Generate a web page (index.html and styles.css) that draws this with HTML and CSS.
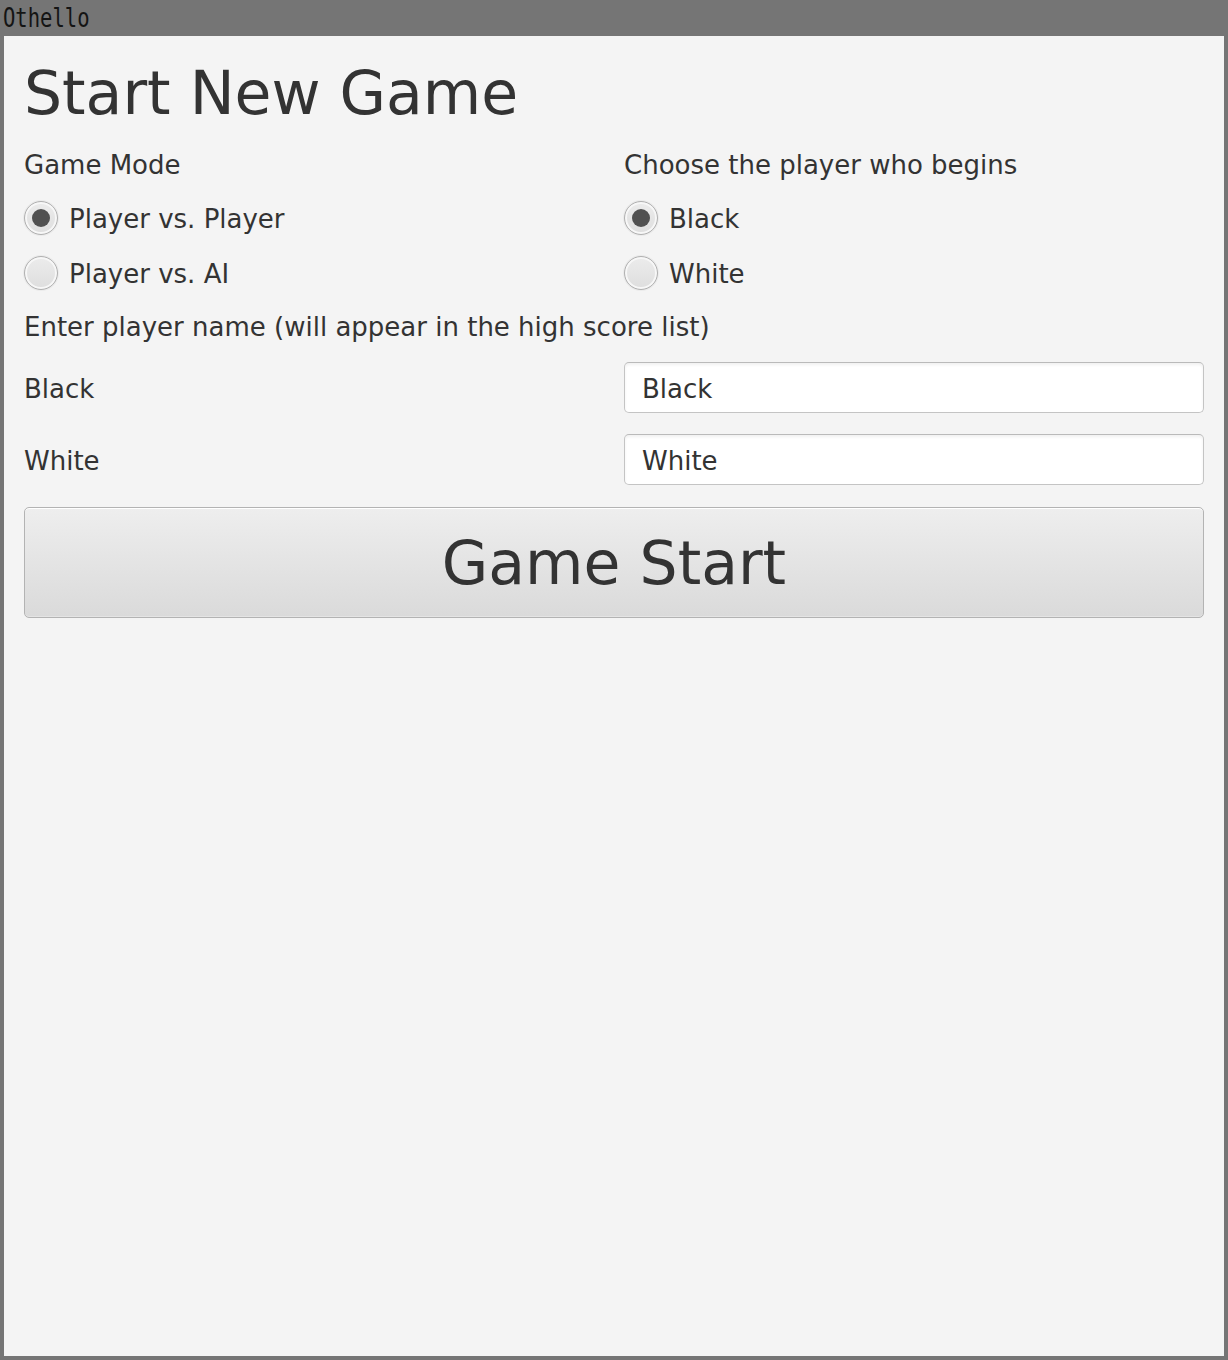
FILE: index.html
```html
<!DOCTYPE html>
<html lang="en">
<head>
<meta charset="utf-8">
<title>Othello</title>
<link rel="stylesheet" href="styles.css">
</head>
<body>
<div class="window">
  <div class="titlebar"><span class="title-text">Othello</span></div>
  <div class="content">
    <h1 class="heading">Start New Game</h1>
    <div class="row row-head">
      <div class="label">Game Mode</div>
      <div class="label">Choose the player who begins</div>
    </div>
    <div class="row row-radio">
      <label class="radio-item"><span class="radio selected"></span><span class="radio-text">Player vs. Player</span></label>
      <label class="radio-item"><span class="radio selected"></span><span class="radio-text">Black</span></label>
    </div>
    <div class="row row-radio row-radio2">
      <label class="radio-item"><span class="radio"></span><span class="radio-text">Player vs. AI</span></label>
      <label class="radio-item"><span class="radio"></span><span class="radio-text">White</span></label>
    </div>
    <div class="label row-enter">Enter player name (will appear in the high score list)</div>
    <div class="row row-field">
      <div class="label field-label">Black</div>
      <input class="field" type="text" value="Black">
    </div>
    <div class="row row-field row-field2">
      <div class="label field-label">White</div>
      <input class="field" type="text" value="White">
    </div>
    <button class="start-btn" type="button">Game Start</button>
  </div>
</div>
</body>
</html>
```
FILE: styles.css
```css
* { box-sizing: border-box; }
html, body { margin: 0; padding: 0; }
body {
  background: #757575;
  font-family: "DejaVu Sans", sans-serif;
  color: #333333;
}
.window {
  width: 1228px;
  height: 1360px;
  display: flex;
  flex-direction: column;
}
.titlebar {
  height: 36px;
  flex: none;
  padding-left: 3px;
  overflow: hidden;
}
.title-text {
  display: inline-block;
  font-family: "DejaVu Sans Mono", monospace;
  font-size: 26px;
  line-height: 36px;
  color: #141414;
  transform: scaleX(0.79);
  transform-origin: left center;
}
.content {
  flex: 1;
  margin: 0 4px 4px 4px;
  background: #f4f4f4;
  padding: 20px 20px;
  display: flex;
  flex-direction: column;
}
.heading {
  margin: 0;
  font-size: 60px;
  font-weight: normal;
  line-height: 74px;
  height: 74px;
}
.row {
  display: grid;
  grid-template-columns: 1fr 1fr;
  column-gap: 20px;
  align-items: center;
}
.label {
  font-size: 26px;
  line-height: 30px;
}
.field-label { padding-top: 2px; }
.row-head { margin-top: 20px; }
.row-radio { margin-top: 20px; height: 35px; }
.radio-item {
  display: flex;
  align-items: center;
  gap: 11px;
  height: 35px;
}
.radio {
  width: 34px;
  height: 34px;
  flex: none;
  border-radius: 50%;
  border: 1px solid #b0b0b0;
  background: linear-gradient(#ececec, #dedede);
  box-shadow: inset 0 0 0 2px #f7f7f7, 0 0 0 1px rgba(0,0,0,0.04);
  position: relative;
}
.radio.selected::after {
  content: "";
  position: absolute;
  left: 7px;
  top: 7px;
  width: 18px;
  height: 18px;
  border-radius: 50%;
  background: #505050;
}
.radio-text {
  font-size: 26px;
  line-height: 35px;
  padding-top: 4px;
}
.row-enter { margin-top: 22px; }
.row-field { margin-top: 20px; height: 51px; }
.row-field2 { margin-top: 21px; }
.field {
  height: 51px;
  width: 100%;
  margin: 0;
  font-family: "DejaVu Sans", sans-serif;
  font-size: 26px;
  color: #333333;
  padding: 2px 16px 0 17px;
  background: #ffffff;
  border: 1px solid #c4c4c4;
  border-top-color: #bababa;
  border-radius: 5px;
  box-shadow: inset 0 2px 3px rgba(0,0,0,0.06);
  outline: none;
}
.start-btn {
  margin-top: 22px;
  height: 111px;
  width: 100%;
  font-family: "DejaVu Sans", sans-serif;
  font-size: 60px;
  color: #333333;
  border: 1px solid #b3b3b3;
  border-radius: 5px;
  background: linear-gradient(#eeeeee, #dadada);
  box-shadow: inset 0 1px 0 #ffffff, inset 0 -1px 0 #e4e4e4;
  padding: 0;
  cursor: pointer;
}
```
